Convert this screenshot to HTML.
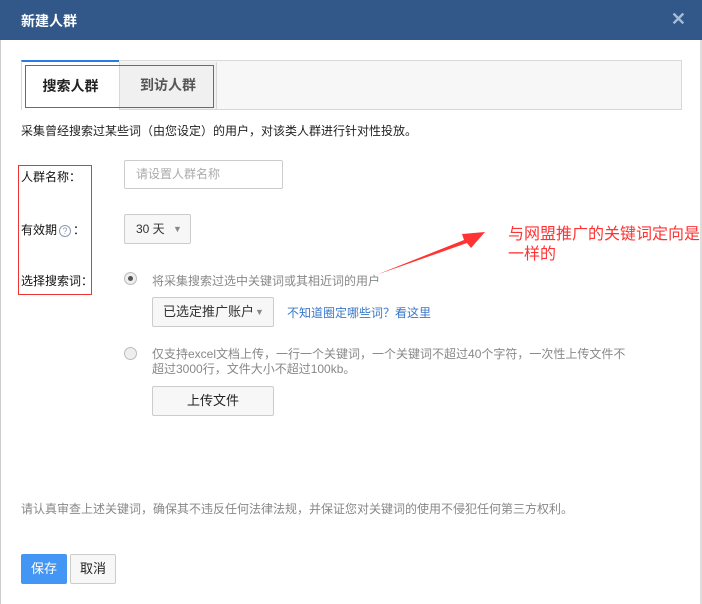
<!DOCTYPE html>
<html><head><meta charset="utf-8"><style>
*{margin:0;padding:0;box-sizing:border-box}
body{width:702px;height:604px;background:#fff;font-family:"Liberation Sans","Noto Sans CJK SC",sans-serif;font-size:12px;color:#333;position:relative;overflow:hidden}
.a{position:absolute;white-space:nowrap}
.hd{left:0;top:0;width:702px;height:40px;background:#325789;color:#fff;font-size:14px;font-weight:bold;padding:11px 0 0 21px}
.x{right:16px;top:9px;color:#a9bbd4;font-size:18px;font-weight:bold}
.tabs{left:21px;top:60px;width:661px;height:50px;background:#f7f7f7;border:1px solid #d8d8d8}
.t1{left:21px;top:60px;width:98px;height:50px;background:#fff;border-top:2px solid #2b7be0;border-left:1px solid #d8d8d8;font-size:14px;font-weight:bold;color:#222;text-align:center;line-height:48px}
.t2{left:119px;top:62px;width:98px;height:47px;background:#f0f0f0;border-left:1px solid #d8d8d8;border-right:1px solid #d8d8d8;font-size:14px;font-weight:bold;color:#555;text-align:center;line-height:47px}
.red{border:1px solid #e33}
.gray{color:#888}
.btn{border:1px solid #ccc;background:#f7f7f7;border-radius:2px}
.arr{color:#888;font-size:9px;position:absolute;top:0}
</style></head><body>
<div class="a" style="left:0;top:40px;width:1px;height:564px;background:#ccc"></div>
<div class="a" style="right:0;top:40px;width:2px;height:564px;background:#ddd"></div>
<div class="a hd">新建人群</div>
<div class="a x">✕</div>
<div class="a tabs"></div>
<div class="a t1">搜索人群</div>
<div class="a t2">到访人群</div>
<div class="a red" style="left:25px;top:65px;width:189px;height:43px"></div>
<div class="a" style="left:21px;top:122px;color:#222">采集曾经搜索过某些词（由您设定）的用户，对该类人群进行针对性投放。</div>
<div class="a red" style="left:18px;top:165px;width:74px;height:130px"></div>
<div class="a" style="left:21px;top:168px;color:#111">人群名称：</div>
<div class="a btn" style="left:124px;top:160px;width:159px;height:29px;background:#fff;color:#aaa;padding-left:11px;line-height:27px">请设置人群名称</div>
<div class="a" style="left:21px;top:221px;color:#111">有效期<span style="color:#8a9ab5;display:inline-block;width:12px;height:12px;border:1px solid #8a9ab5;border-radius:50%;font-size:9px;text-align:center;line-height:10px;margin:0 2px">?</span>：</div>
<div class="a btn" style="left:124px;top:214px;width:67px;height:30px;padding-left:11px;line-height:28px;color:#333">30 天<span class="arr" style="left:48px;line-height:28px">▼</span></div>
<div class="a" style="left:21px;top:272px;color:#111">选择搜索词：</div>
<div class="a" style="left:124px;top:272px;width:13px;height:13px;border:1px solid #bbb;border-radius:50%;background:#eee"><div style="width:5px;height:5px;background:#555;border-radius:50%;margin:3px"></div></div>
<div class="a gray" style="left:152px;top:272px">将采集搜索过选中关键词或其相近词的用户</div>
<div class="a btn" style="left:152px;top:297px;width:122px;height:30px;padding-left:10px;line-height:28px;color:#333;font-size:13px">已选定推广账户<span class="arr" style="left:102px;line-height:28px">▼</span></div>
<div class="a" style="left:287px;top:304px;color:#3a78c8">不知道圈定哪些词？看这里</div>
<div class="a" style="left:124px;top:347px;width:13px;height:13px;border:1px solid #bbb;border-radius:50%;background:#eee"></div>
<div class="a gray" style="left:152px;top:347px;line-height:15px;width:480px;white-space:normal">仅支持excel文档上传，一行一个关键词，一个关键词不超过40个字符，一次性上传文件不超过3000行，文件大小不超过100kb。</div>
<div class="a btn" style="left:152px;top:386px;width:122px;height:30px;text-align:center;line-height:28px;color:#222;font-size:13px">上传文件</div>
<svg class="a" style="left:370px;top:225px" width="115" height="52"><polygon points="6,50 94,15 92,9 115,7 101,23 97,18" fill="#f33"/></svg>
<div class="a" style="left:508px;top:225px;color:#f33;font-size:16px;line-height:20px;width:194px;white-space:normal">与网盟推广的关键词定向是一样的</div>
<div class="a gray" style="left:21px;top:500px">请认真审查上述关键词，确保其不违反任何法律法规，并保证您对关键词的使用不侵犯任何第三方权利。</div>
<div class="a" style="left:21px;top:554px;width:46px;height:30px;background:#4496f5;border-radius:2px;color:#fff;font-size:13px;text-align:center;line-height:30px">保存</div>
<div class="a btn" style="left:70px;top:554px;width:46px;height:30px;text-align:center;line-height:28px;font-size:13px;color:#222">取消</div>
</body></html>
